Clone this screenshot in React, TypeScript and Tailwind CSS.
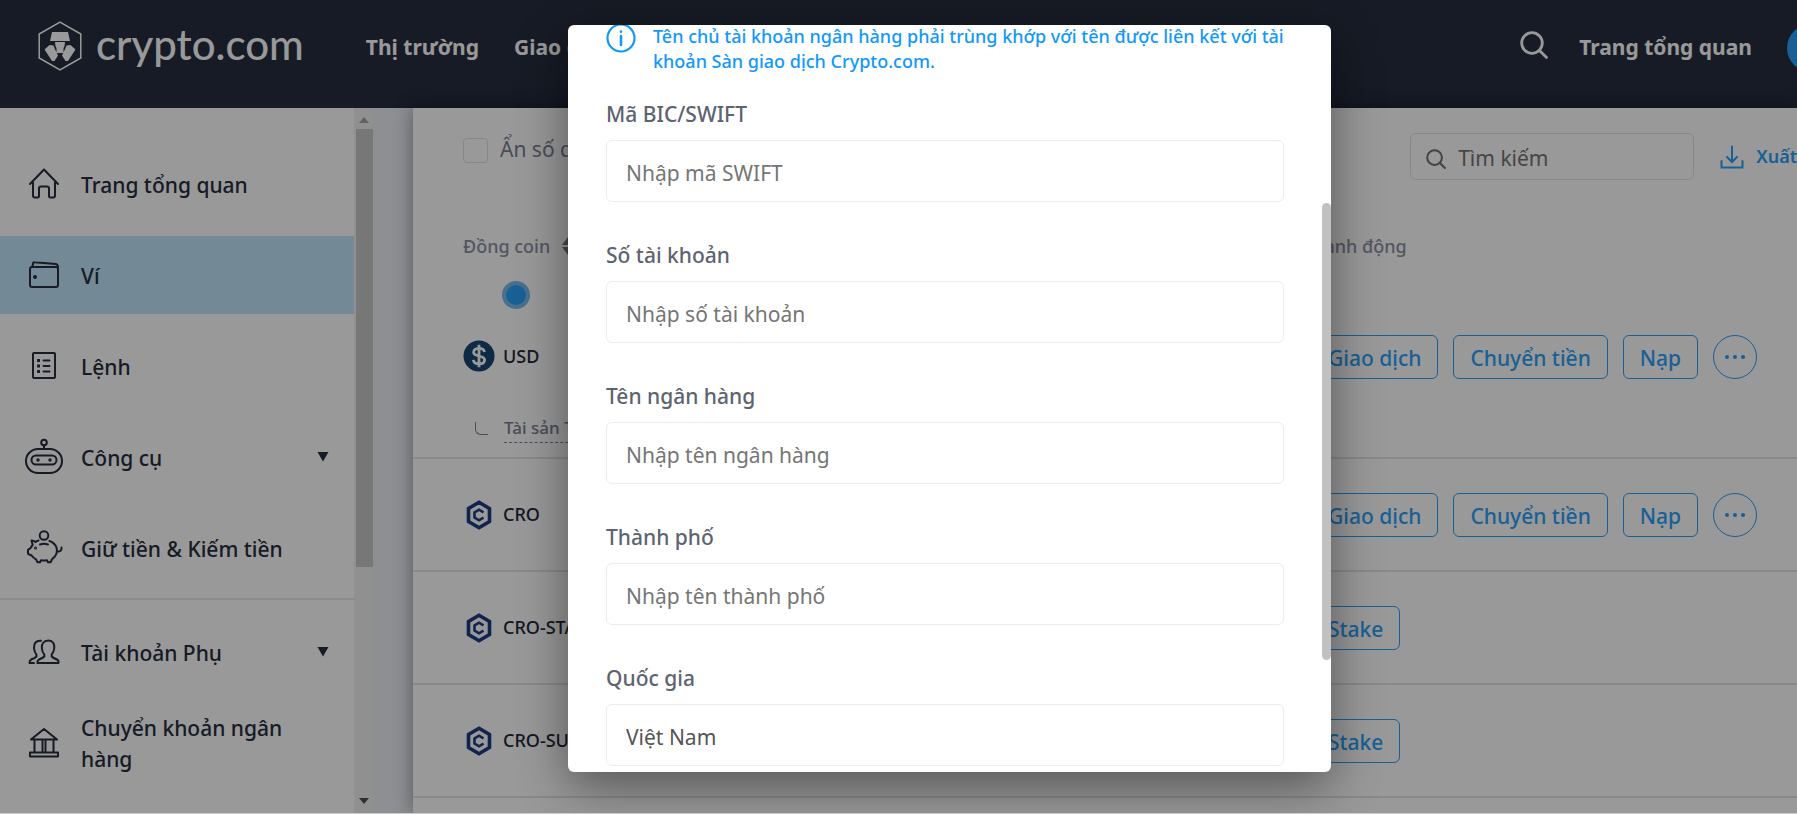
import type { ReactNode } from 'react';

const navItems = [
  { label: 'Trang tổng quan', icon: <HomeIcon /> },
  { label: 'Ví', icon: <WalletIcon />, active: true },
  { label: 'Lệnh', icon: <OrdersIcon /> },
  { label: 'Công cụ', icon: <RobotIcon />, expandable: true },
  { label: 'Giữ tiền & Kiếm tiền', icon: <PiggyIcon /> },
];

const accountItems = [
  { label: 'Tài khoản Phụ', icon: <PeopleIcon />, expandable: true },
  { label: 'Chuyển khoản ngân hàng', icon: <BankIcon /> },
];

const coins = [
  { name: 'CRO', actions: ['Giao dịch', 'Chuyển tiền', 'Nạp'], more: true },
  { name: 'CRO-STAKE', actions: ['Stake'], more: false },
  { name: 'CRO-SUPER', actions: ['Stake'], more: false },
];

const fields = [
  { id: 'swift', label: 'Mã BIC/SWIFT', placeholder: 'Nhập mã SWIFT' },
  { id: 'account', label: 'Số tài khoản', placeholder: 'Nhập số tài khoản' },
  { id: 'bank', label: 'Tên ngân hàng', placeholder: 'Nhập tên ngân hàng' },
  { id: 'city', label: 'Thành phố', placeholder: 'Nhập tên thành phố' },
  { id: 'country', label: 'Quốc gia', placeholder: '', value: 'Việt Nam' },
];

function LineIcon({ children }: { children: ReactNode }) {
  return (
    <svg
      viewBox="0 0 44 44"
      className="size-11 shrink-0"
      fill="none"
      stroke="currentColor"
      strokeWidth="2"
      strokeLinecap="round"
      strokeLinejoin="round"
      aria-hidden="true"
    >
      {children}
    </svg>
  );
}

function HomeIcon() {
  return (
    <LineIcon>
      <path d="M8 22 22 7.500 36 22M11 20v13.500a2 2 0 0 0 2 2h2.500a1.500 1.500 0 0 0 1.500-1.500v-7.500a2 2 0 0 1 2-2h6a2 2 0 0 1 2 2V34a1.500 1.500 0 0 0 1.500 1.500H31a2 2 0 0 0 2-2V20" />
    </LineIcon>
  );
}

function WalletIcon() {
  return (
    <LineIcon>
      <rect x="8" y="14" width="28" height="20" rx="2" />
      <path d="M10.500 14 11 10.500q.2-1.500 1.800-1.300l21 1.800q2.200.4 2.200 3.500" />
      <circle cx="13" cy="24" r="1" fill="currentColor" />
    </LineIcon>
  );
}

function OrdersIcon() {
  return (
    <LineIcon>
      <rect x="11" y="9" width="22" height="25" rx="1" />
      <path d="M21.500 16.500h6M21.500 22h6M21.500 27.500h6" />
      <path d="M16.500 16.500h.1M16.500 22h.1M16.500 27.500h.1" strokeWidth="2.800" strokeLinecap="square" />
    </LineIcon>
  );
}

function RobotIcon() {
  return (
    <LineIcon>
      <rect x="4" y="14" width="36" height="24" rx="12" />
      <rect x="9.500" y="20.500" width="25" height="9" rx="4.500" />
      <circle cx="22" cy="7.500" r="2.800" />
      <path d="M22 10.500V14" />
      <circle cx="16" cy="25" r=".7" fill="currentColor" />
      <circle cx="28" cy="25" r=".7" fill="currentColor" />
    </LineIcon>
  );
}

function PiggyIcon() {
  return (
    <LineIcon>
      <circle cx="22" cy="9.500" r="4.300" />
      <path d="M16.500 14.500q-1.800.4-3 1.500-1.500-1.400-4-1.400l1.200 4.400q-1.500 1.500-2.200 3.200L6 23.800v4l3.600 1.700q2 2.600 4.600 4.100l1.200 2.600h2.600l1-2q3 .5 6 0l1 2h2.600l1.600-3.200q4.800-3.800 4.700-8.600 0-5-4.200-7.800-1.500-1.200-3.300-1.600" />
      <path d="M18 18.500q4-1.400 8 0M35 25.500q5 .5 4.500-4" />
      <circle cx="13.500" cy="22" r=".5" fill="currentColor" />
    </LineIcon>
  );
}

function PeopleIcon() {
  return (
    <LineIcon>
      <path d="M26.500 10.500c-5 0-7 3.500-6.700 7.500.3 3 1 5 2.500 6.500v2q-1.500 1.500-5.300 3-1.700.8-1.700 3.500h21.200q.3-2.700-1.500-3.500-4-1.500-5.300-3v-2c1.500-1.500 2.300-3.500 2.600-6.500.3-4-1.300-7.500-5.800-7.500z" />
      <path d="M19 10.700c-5-.6-7.300 3-7 7.300.3 3 1 5 2.400 6.500v2q-1.500 1.500-5.200 3-1.700.8-1.700 3.500H12" />
    </LineIcon>
  );
}

function BankIcon() {
  return (
    <LineIcon>
      <path d="M22 8 35 18.500H9zM12.500 18.500V31M20.500 18.500V31M23.500 18.500V31M31.500 18.500V31" />
      <rect x="8" y="31.500" width="28" height="4" />
    </LineIcon>
  );
}

function SearchIcon({ className }: { className: string }) {
  return (
    <svg viewBox="0 0 28 28" className={className} fill="none" stroke="currentColor" strokeWidth="2.800" strokeLinecap="round" aria-hidden="true">
      <circle cx="12" cy="12" r="10.300" />
      <path d="m19.500 19.500 7 7" />
    </svg>
  );
}

function Logo() {
  return (
    <a href="#" className="flex h-[52px] items-start gap-[14px] text-white">
      <svg viewBox="0 0 44 50" className="mt-px h-[50px] w-[44px]" aria-hidden="true">
        <path d="M22 1.200 42.800 13v24L22 48.800 1.200 37V13z" fill="none" stroke="currentColor" strokeWidth="1.500" />
        <path
          fill="currentColor"
          d="M14 11h16l2 9H12zM17 21h10l-.5 4.500L25.500 27v5h-7v-5l-1-1.500zM11.500 24l4 .5 1.200 3 3.300 7-3.500 5.500h-2.500L6.500 28.500zM32.500 24l-4 .5-1.200 3-3.300 7 3.500 5.500H30l7.500-11.500z"
        />
      </svg>
      <span className="font-[Lato,sans-serif] text-[42px] leading-[48px] font-medium">crypto.com</span>
    </a>
  );
}

function CroIcon() {
  return (
    <svg viewBox="0 0 32 32" className="size-8" fill="none" aria-hidden="true">
      <path d="M16 3.300 26.500 9.500v13L16 28.700 5.500 22.500v-13z" stroke="#1b3c82" strokeWidth="3.600" />
      <path d="M20.500 13.300 16 10.700l-4.500 2.700v5.200l4.500 2.700 4.500-2.600" stroke="#1b3c82" strokeWidth="2.600" />
    </svg>
  );
}

function UsdIcon() {
  return (
    <svg viewBox="0 0 32 32" className="size-8" fill="none" aria-hidden="true">
      <circle cx="16" cy="16" r="15.500" fill="#1a4672" />
      <path d="M21.500 12c-.4-2.400-2.500-3.600-5.500-3.600-3.200 0-5.400 1.500-5.400 3.800 0 5.200 11 2.400 11 7.700 0 2.400-2.300 3.900-5.600 3.900-3.200 0-5.400-1.400-5.700-4M16 4.800v22.400" stroke="#fff" strokeWidth="2.800" />
    </svg>
  );
}

type NavItemProps = {
  label: string;
  icon: ReactNode;
  active?: boolean;
  expandable?: boolean;
};

function NavItem({ label, icon, active, expandable }: NavItemProps) {
  return (
    <a
      href="#"
      className={`flex h-[78px] items-center gap-[15px] pr-[25px] pl-[22px] text-[21px] leading-[31px] font-medium ${active ? 'bg-[#c1e4fb]' : ''}`}
    >
      {icon}
      <span className="flex-1 pt-0.5">{label}</span>
      {expandable && (
        <svg viewBox="0 0 12 10" className="h-[10px] w-3" fill="currentColor" aria-hidden="true">
          <path d="M.5 0h11L6 9.500z" />
        </svg>
      )}
    </a>
  );
}

function Actions({ actions, more }: { actions: string[]; more: boolean }) {
  return (
    <div className="flex gap-[15px]">
      {actions.map((action) => (
        <button key={action} className="h-11 shrink-0 rounded-md border border-[#2aa0fa] px-4 pt-1 text-[21px] font-medium text-[#2aa0fa]">
          {action}
        </button>
      ))}
      {more && (
        <button aria-label="Thêm" className="flex size-11 shrink-0 items-center justify-center rounded-full border border-[#2aa0fa] text-[#2aa0fa]">
          <svg viewBox="0 0 20 4" className="h-1 w-5" fill="currentColor">
            <circle cx="2" cy="2" r="2" />
            <circle cx="10" cy="2" r="2" />
            <circle cx="18" cy="2" r="2" />
          </svg>
        </button>
      )}
    </div>
  );
}

function Header() {
  return (
    <header className="flex h-[108px] shrink-0 items-start bg-[#262d3e] pt-[20px] pl-[38px] text-[21px] font-bold text-white">
      <Logo />
      <nav className="ml-[62px] flex h-[56px] items-center gap-[35px]">
        <a href="#">Thị trường</a>
        <a href="#">Giao dịch</a>
      </nav>
      <div className="ml-auto flex h-[56px] items-center">
        <button aria-label="Tìm kiếm" className="pb-1.5">
          <SearchIcon className="size-7" />
        </button>
        <a href="#" className="ml-[31px]">Trang tổng quan</a>
        <button aria-label="Tài khoản" className="-mr-[38px] ml-[35px] size-12 rounded-full bg-[#2aa0fa]" />
      </div>
    </header>
  );
}

function Sidebar() {
  return (
    <aside className="flex w-[373px] shrink-0 overflow-hidden bg-white">
      <nav className="flex-1 pt-[37px]">
        <div className="flex flex-col gap-[13px] border-b-2 border-[#e8e8ea] pb-[11px]">
          {navItems.map((item) => (
            <NavItem key={item.label} {...item} />
          ))}
        </div>
        <div className="flex flex-col gap-[13px] pt-[13px]">
          {accountItems.map((item) => (
            <NavItem key={item.label} {...item} />
          ))}
        </div>
      </nav>
      <div className="flex w-[19px] flex-col items-center bg-[#f1f1f1]" aria-hidden="true">
        <svg viewBox="0 0 10 6" className="mt-[9px] mb-[6px] h-[6px] w-[10px] fill-[#a3a3a3]">
          <path d="M0 6h10L5 0z" />
        </svg>
        <div className="h-[438px] w-[17px] self-end bg-[#c6c6c6]" />
        <svg viewBox="0 0 10 6" className="mt-auto mb-[9px] h-[6px] w-[10px] fill-[#505050]">
          <path d="M0 0h10L5 6z" />
        </svg>
      </div>
    </aside>
  );
}

function Wallet() {
  return (
    <main className="ml-10 min-w-0 flex-1 overflow-hidden bg-white shadow-[0_0_18px_rgba(0,0,0,0.4)]">
      <div className="flex h-[72px] items-end justify-between pl-[50px]">
        <label className="flex items-center gap-3 self-center pt-3 text-[21px] text-[#7b8094]">
          <input type="checkbox" className="size-[25px] appearance-none rounded-sm border border-[#dfe1ea]" />
          Ẩn số dư nhỏ
        </label>
        <div className="flex items-center">
          <label className="flex h-[47px] w-[284px] items-center gap-3 rounded-md border border-[#e3e3e6] px-[15px] text-[#6e6e72]">
            <SearchIcon className="mt-1 size-5 shrink-0" />
            <input placeholder="Tìm kiếm" aria-label="Tìm kiếm" className="w-full min-w-0 pt-1 text-[21px] outline-none placeholder:text-[#757575]" />
          </label>
          <button className="ml-[26px] flex items-center gap-3 text-[18px] font-semibold whitespace-nowrap text-[#2aa0fa]">
            <svg viewBox="0 0 24 24" className="size-6" fill="none" stroke="currentColor" strokeWidth="2" strokeLinecap="round" aria-hidden="true">
              <path d="M12 1.500v15M7 12l5 5 5-5M1.500 16v6.500h21V16" />
            </svg>
            Xuất
          </button>
        </div>
      </div>

      <table className="mt-[46px] w-full table-fixed border-collapse text-left">
        <thead>
          <tr className="h-[40px] text-[18px] text-[#8b8fa5]">
            <th className="pl-[50px] font-medium">
              <span className="flex items-center gap-3">
                Đồng coin
                <svg viewBox="0 0 12 18" className="h-[18px] w-3 fill-[#777]" aria-hidden="true">
                  <path d="M0 8h12L6 0zM0 10h12l-6 8z" />
                </svg>
              </span>
            </th>
            <th className="w-[486px] font-medium">Hành động</th>
          </tr>
        </thead>
        <tbody className="text-[18px] text-[#222736]">
          <tr className="border-b-2 border-[#e4e4e6] align-top">
            <td className="h-[192px] pt-[15px] pl-[50px]">
              <div className="ml-[39px] size-7 rounded-full border-4 border-[#7bbde9] bg-[#2aa0fa]" />
              <div className="mt-[31px] flex items-center gap-2 font-medium">
                <UsdIcon />
                USD
              </div>
              <div className="mt-[42px] flex items-center gap-4 pl-3 text-[17px] font-medium text-[#7b8094]">
                <span className="size-[13px] rounded-bl-md border-b border-l border-[#7b8094]" />
                <span className="border-b border-dashed border-[#7b8094] leading-[28px]">Tài sản Tiền</span>
              </div>
            </td>
            <td className="pt-[69px]">
              <Actions actions={['Giao dịch', 'Chuyển tiền', 'Nạp']} more />
            </td>
          </tr>
          {coins.map((coin) => (
            <tr key={coin.name} className="h-[113px] border-b-2 border-[#e4e4e6]">
              <td className="pl-[50px]">
                <div className="flex items-center gap-2 font-medium">
                  <CroIcon />
                  {coin.name}
                </div>
              </td>
              <td>
                <Actions actions={coin.actions} more={coin.more} />
              </td>
            </tr>
          ))}
        </tbody>
      </table>
    </main>
  );
}

function BankAccountDialog() {
  return (
    <div
      role="dialog"
      aria-modal="true"
      aria-label="Tài khoản ngân hàng"
      className="relative h-full w-full max-w-[763px] overflow-hidden rounded-md bg-white shadow-[0_14px_50px_rgba(0,0,0,0.45)]"
    >
      <form className="-mt-px pr-[47px] pl-[38px]">
        <div className="flex gap-[17px] text-[#1199fa]">
          <svg viewBox="0 0 30 30" className="-mt-px size-[30px] shrink-0" fill="none" stroke="currentColor" strokeWidth="2.200" strokeLinecap="round" aria-hidden="true">
            <circle cx="15" cy="15" r="13.500" />
            <path d="M15 13v9M15 8.500v.2" strokeWidth="2.600" />
          </svg>
          <p className="text-[18px] leading-[25px] font-medium whitespace-nowrap">
            Tên chủ tài khoản ngân hàng phải trùng khớp với tên được liên kết với tài
            <br />
            khoản Sàn giao dịch Crypto.com.
          </p>
        </div>
        <div className="mt-[25px] flex flex-col gap-[38px]">
          {fields.map((field) => (
            <div key={field.id}>
              <label htmlFor={field.id} className="mb-[11px] block text-[21px] leading-[30px] font-medium text-[#5d6370]">
                {field.label}
              </label>
              <input
                id={field.id}
                placeholder={field.placeholder}
                defaultValue={field.value}
                className="h-[62px] w-full rounded-md border border-[#eaecf4] px-[19px] pt-1 text-[21px] text-[#555] outline-none placeholder:text-[#757575]"
              />
            </div>
          ))}
        </div>
      </form>
      <div className="absolute top-[178px] right-0 h-[457px] w-[9px] rounded-full bg-[#c1c1c1]" />
    </div>
  );
}

export default function App() {
  return (
    <div className="h-screen overflow-hidden bg-white pb-2 font-['Noto_Sans','Open_Sans',sans-serif] text-[#262d3e]">
      <div className="relative flex h-full flex-col overflow-hidden border-b border-[#ccc]">
        <Header />
        <div className="flex min-h-0 flex-1 bg-[#eceef5]">
          <Sidebar />
          <Wallet />
        </div>
        <div className="absolute inset-0 flex justify-center bg-black/40 pt-[25px] pb-[41px] pl-[102px]">
          <BankAccountDialog />
        </div>
      </div>
    </div>
  );
}
